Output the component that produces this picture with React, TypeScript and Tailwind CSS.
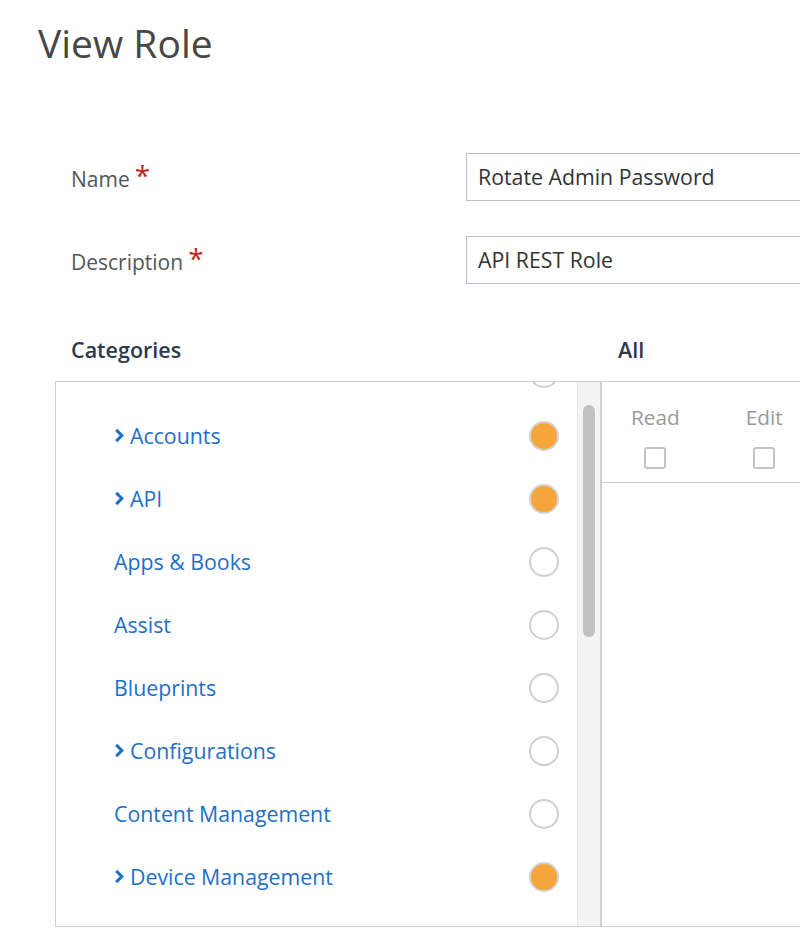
const ROWS = [
  { label: "Hidden", expand: false, on: false },
  { label: "Accounts", expand: true, on: true },
  { label: "API", expand: true, on: true },
  { label: "Apps & Books", expand: false, on: false },
  { label: "Assist", expand: false, on: false },
  { label: "Blueprints", expand: false, on: false },
  { label: "Configurations", expand: true, on: false },
  { label: "Content Management", expand: false, on: false },
  { label: "Device Management", expand: true, on: true },
];

function Chevron() {
  return (
    <svg viewBox="0 0 10 16" className="mr-[6px] h-[15px] w-[10px]" fill="none">
      <path d="M2 2l6 6-6 6" stroke="#1e6fc8" strokeWidth="3.2" strokeLinecap="butt" strokeLinejoin="miter" />
    </svg>
  );
}

function Box() {
  return <span className="block h-[22px] w-[22px] rounded-[3px] border-2 border-[#c4c4c8] bg-white" />;
}

function Star() {
  return <span className="relative top-[0px] ml-[5px] self-start text-[28px] leading-[28px] text-[#c0271b]">*</span>;
}

export default function App() {
  return (
    <div
      className="h-[932px] w-[800px] overflow-hidden bg-white"
      style={{ fontFamily: '"Open Sans", "Liberation Sans", sans-serif' }}
    >
      <h1 className="pl-[38px] pt-[20px] text-[39px] font-normal leading-[46px] text-[#474747]">View Role</h1>

      <div className="mt-[87px] flex items-center">
        <div className="flex w-[466px] items-end pl-[71px] text-[21px] leading-[28px] text-[#555]">
          <span className="pt-[4px]">Name</span>
          <Star />
        </div>
        <div className="flex h-[48px] flex-1 items-center border border-r-0 border-[#b6bfca] pl-[11px] text-[21.3px] text-[#333]">
          Rotate Admin Password
        </div>
      </div>

      <div className="mt-[35px] flex items-center">
        <div className="flex w-[466px] items-end pl-[71px] text-[21px] leading-[28px] text-[#555]">
          <span className="pt-[4px]">Description</span>
          <Star />
        </div>
        <div className="flex h-[48px] flex-1 items-center border border-r-0 border-[#b6bfca] pl-[11px] text-[21.3px] text-[#333]">
          API REST Role
        </div>
      </div>

      <div className="mt-[52px] flex text-[21.5px] font-semibold leading-[28px] text-[#2d3a48]">
        <div className="w-[547px] pl-[71px]">Categories</div>
        <div className="pl-[71px]">All</div>
      </div>

      <div className="ml-[55px] mt-[17px] flex h-[546px]">
        <div className="flex w-[546px] border border-[#cfcfcf]">
          <div className="flex-1 overflow-hidden">
            <div className="-mt-[41px]">
              {ROWS.map((r, i) => (
                <div key={r.label} className="flex h-[63px] items-center justify-between pl-[58px] pr-[18px]">
                  <div className="flex items-center text-[21.3px] text-[#1e6fc8]">
                    {i > 0 && r.expand && <Chevron />}
                    {i > 0 && r.label}
                  </div>
                  <span
                    className={
                      r.on
                        ? "block h-[30px] w-[30px] rounded-full border-2 border-[#d2d2d2] bg-[#f5a53a]"
                        : "block h-[30px] w-[30px] rounded-full border-2 border-[#cfcfcf] bg-white"
                    }
                  />
                </div>
              ))}
            </div>
          </div>
          <div className="w-[23px] border-l border-[#e6e6e6] bg-[#f4f4f4] px-[5px] pt-[23px]">
            <div className="h-[232px] rounded-full bg-[#c1c1c1]" />
          </div>
        </div>
        <div className="flex-1 border border-r-0 border-[#cfcfcf]">
          <div className="flex h-[101px] gap-[66px] border-b border-[#cfcfcf] pl-[29px] pt-[21px] text-[20.8px] text-[#9a9a9a]">
            <div className="flex flex-col items-center gap-[16px]">
              <span className="leading-[28px]">Read</span>
              <Box />
            </div>
            <div className="flex flex-col items-center gap-[16px]">
              <span className="leading-[28px]">Edit</span>
              <Box />
            </div>
          </div>
        </div>
      </div>
    </div>
  );
}
